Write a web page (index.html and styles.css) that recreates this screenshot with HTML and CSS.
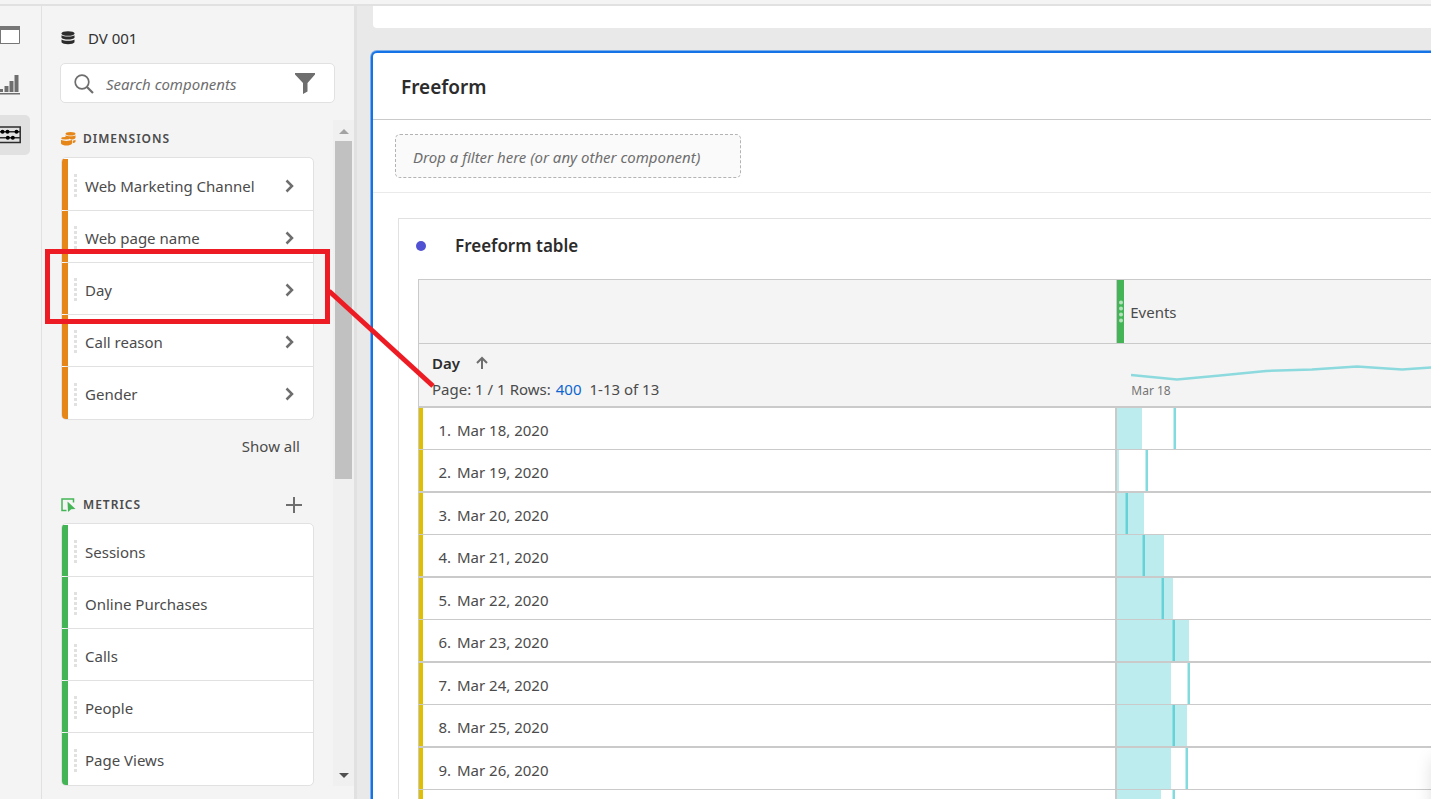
FILE: index.html
```html
<!DOCTYPE html>
<html lang="en">
<head>
<meta charset="utf-8">
<title>Freeform</title>
<link rel="stylesheet" href="styles.css">
</head>
<body>
<div class="topbar"></div>
<div class="app">
  <nav class="rail" aria-label="Panels">
    <button class="rail-btn" aria-label="Panels"><svg width="30" height="40" viewBox="0 0 30 40"><path fill="#fff" d="M-2 13h22v15H-2z"/><path fill="#767676" d="M-2 11h22v4H-2z"/><path fill="none" stroke="#767676" d="M-2 28.500h21.500V13M.5 15v13"/></svg></button>
    <button class="rail-btn" aria-label="Visualizations"><svg width="30" height="40" viewBox="0 0 30 40"><path fill="#6e6e6e" d="M0 24h3v3H0zM4.500 21h4v6h-4zM9.500 16h4v11h-4zM14.500 10h4v17h-4zM0 28h20v1.500H0z"/></svg></button>
    <button class="rail-btn selected" aria-label="Components"><svg width="30" height="40" viewBox="0 0 30 40"><path fill="none" stroke="#2c2c2c" stroke-width="1.500" d="M-2 12h22.200v15.500H-2M0 16.800h20M0 22.800h20"/><circle cx="2.500" cy="16.800" r="2"/><circle cx="7.500" cy="16.800" r="2"/><circle cx="16.500" cy="16.800" r="2"/><circle cx="7.800" cy="22.800" r="2"/><circle cx="12.800" cy="22.800" r="2"/></svg></button>
  </nav>

  <aside class="sidebar">
    <div class="source">
      <svg width="14" height="14" viewBox="0 0 14 14" fill="#2c2c2c"><ellipse cx="7" cy="2.500" rx="6.500" ry="2.300"/><path d="M.5 4.300c2 1.700 11 1.700 13 0v2.400c-1 2.400-12 2.400-13 0zM.5 8.500c2 1.700 11 1.700 13 0v2.800c-1 2.600-12 2.600-13 0z"/></svg>
      <span>DV 001</span>
    </div>
    <div class="search">
      <svg width="22" height="22" viewBox="0 0 22 22" fill="none" stroke="#6e6e6e"><circle cx="9" cy="10" r="6.800" stroke-width="1.700"/><path stroke-width="2.200" d="M14 15l6 6"/></svg>
      <input type="text" placeholder="Search components" aria-label="Search components">
      <button class="plain" aria-label="Filter"><svg width="20" height="22" viewBox="0 0 20 22"><path fill="#6e6e6e" d="M0 1h20v1.500L12.500 11v8.500L8 22V11L0 2.500z"/></svg></button>
    </div>
    <div class="scroller">
      <div class="lists">
        <div class="section-head">
          <svg width="15" height="14" viewBox="0 0 15 14" fill="#e68619"><ellipse cx="9.500" cy="1.800" rx="5" ry="1.800"/><path d="M4.500 3.300c1.500 1.300 8.500 1.300 10 0v2.500c-.5 1.500-3 1.700-4.500 1.700C9 6 6 5.700 4.500 5.400zM0 7.800c2 1.500 9 1.500 11 0v3.700c-1.500 2.800-9.500 2.800-11 0z"/><ellipse cx="4.500" cy="6.200" rx="4.300" ry="1.200"/><path d="M11.700 8.800c1.300-.2 2.300-.5 2.800-1v2c-.5.800-1.500 1.200-2.800 1.400z"/></svg>
          <h2>DIMENSIONS</h2>
        </div>
        <ul class="cards dimensions">
          <li><i class="grip"></i><span>Web Marketing Channel</span><button class="plain" aria-label="Expand Web Marketing Channel"><svg class="chev" viewBox="0 0 9 14"><path d="M1.500 1.500L7 7l-5.500 5.500"/></svg></button></li>
          <li><i class="grip"></i><span>Web page name</span><button class="plain" aria-label="Expand Web page name"><svg class="chev" viewBox="0 0 9 14"><path d="M1.500 1.500L7 7l-5.500 5.500"/></svg></button></li>
          <li><i class="grip"></i><span>Day</span><button class="plain" aria-label="Expand Day"><svg class="chev" viewBox="0 0 9 14"><path d="M1.500 1.500L7 7l-5.500 5.500"/></svg></button></li>
          <li><i class="grip"></i><span>Call reason</span><button class="plain" aria-label="Expand Call reason"><svg class="chev" viewBox="0 0 9 14"><path d="M1.500 1.500L7 7l-5.500 5.500"/></svg></button></li>
          <li><i class="grip"></i><span>Gender</span><button class="plain" aria-label="Expand Gender"><svg class="chev" viewBox="0 0 9 14"><path d="M1.500 1.500L7 7l-5.500 5.500"/></svg></button></li>
        </ul>
        <button class="plain show-all">Show all</button>
        <div class="section-head">
          <svg width="15" height="14" viewBox="0 0 15 14"><path fill="none" stroke="#44b556" stroke-width="1.500" d="M12.500 4.500V1H1v11.500h4.500"/><path fill="#44b556" d="M6.500 3.500L14.500 11l-4.300.2L7 14z"/></svg>
          <h2>METRICS</h2>
          <button class="plain add" aria-label="Add metric"><svg width="16" height="16" viewBox="0 0 16 16"><path stroke="#6e6e6e" stroke-width="2" d="M8 0v16M0 8h16"/></svg></button>
        </div>
        <ul class="cards metrics">
          <li><i class="grip"></i><span>Sessions</span></li>
          <li><i class="grip"></i><span>Online Purchases</span></li>
          <li><i class="grip"></i><span>Calls</span></li>
          <li><i class="grip"></i><span>People</span></li>
          <li><i class="grip"></i><span>Page Views</span></li>
        </ul>
      </div>
      <div class="scrollbar">
        <svg width="10" height="5" viewBox="0 0 10 5"><path fill="#a3a3a3" d="M5 0l5 5H0z"/></svg>
        <div class="thumb"></div>
        <svg width="10" height="5" viewBox="0 0 10 5"><path fill="#505050" d="M0 0h10L5 5z"/></svg>
      </div>
    </div>
  </aside>

  <main class="workspace">
    <div class="previous-panel"></div>
    <section class="panel">
      <h1>Freeform</h1>
      <div class="filter-zone"><div class="drop">Drop a filter here (or any other component)</div></div>
      <div class="viz">
        <div class="viz-head"><i class="dot"></i><h3>Freeform table</h3></div>
        <table>
          <colgroup><col class="col-day"><col></colgroup>
          <thead>
            <tr class="metric-row">
              <th></th>
              <th><div class="metric"><svg class="handle" viewBox="0 0 7 24" fill="#b5e2bc"><circle cx="4" cy="3" r="2"/><circle cx="4" cy="9" r="2"/><circle cx="4" cy="15" r="2"/><circle cx="4" cy="21" r="2"/></svg><span>Events</span></div></th>
            </tr>
            <tr class="summary-row">
              <th>
                <div class="sort"><span>Day</span><svg width="12" height="14" viewBox="0 0 12 14" fill="none" stroke="#6e6e6e" stroke-width="2"><path d="M6 13V2M1 7l5-5 5 5"/></svg></div>
                <div class="paging"><span>Page: 1 / 1</span><span>Rows:</span><button class="plain rows-link">400</button><span>1-13 of 13</span></div>
              </th>
              <th><div class="trend"><svg width="300" height="18" viewBox="0 0 300 18"><path fill="none" stroke="#8cdade" stroke-width="2.500" d="M0 10l46 4.500 43-4 46-4.500 46-1.500 45-3 45 3 29-2"/></svg><span>Mar 18</span></div></th>
            </tr>
          </thead>
          <tbody>
            <tr><td><div class="day"><b>1.</b>Mar 18, 2020</div></td><td><div class="cell"><i class="bar" style="width:25px"></i><i class="tick" style="left:56px"></i></div></td></tr>
            <tr><td><div class="day"><b>2.</b>Mar 19, 2020</div></td><td><div class="cell"><i class="bar" style="width:2px"></i><i class="tick" style="left:28px"></i></div></td></tr>
            <tr><td><div class="day"><b>3.</b>Mar 20, 2020</div></td><td><div class="cell"><i class="bar" style="width:27px"></i><i class="tick" style="left:8px"></i></div></td></tr>
            <tr><td><div class="day"><b>4.</b>Mar 21, 2020</div></td><td><div class="cell"><i class="bar" style="width:47px"></i><i class="tick" style="left:25px"></i></div></td></tr>
            <tr><td><div class="day"><b>5.</b>Mar 22, 2020</div></td><td><div class="cell"><i class="bar" style="width:56px"></i><i class="tick" style="left:44px"></i></div></td></tr>
            <tr><td><div class="day"><b>6.</b>Mar 23, 2020</div></td><td><div class="cell"><i class="bar" style="width:72px"></i><i class="tick" style="left:55px"></i></div></td></tr>
            <tr><td><div class="day"><b>7.</b>Mar 24, 2020</div></td><td><div class="cell"><i class="bar" style="width:54px"></i><i class="tick" style="left:70px"></i></div></td></tr>
            <tr><td><div class="day"><b>8.</b>Mar 25, 2020</div></td><td><div class="cell"><i class="bar" style="width:70px"></i><i class="tick" style="left:55px"></i></div></td></tr>
            <tr><td><div class="day"><b>9.</b>Mar 26, 2020</div></td><td><div class="cell"><i class="bar" style="width:54px"></i><i class="tick" style="left:68px"></i></div></td></tr>
            <tr><td><div class="day"></div></td><td><div class="cell"><i class="bar" style="width:44px"></i><i class="tick" style="left:55px"></i></div></td></tr>
          </tbody>
        </table>
      </div>
    </section>
  </main>
</div>
<svg class="callout" width="400" height="150" viewBox="0 0 400 150" fill="none" stroke="#ed1c24" stroke-width="5"><path d="M2.500 2.500h280v70h-280z"/><path d="M284 42L388 137"/></svg>
<div class="float-shadow"></div>
</body>
</html>
```
FILE: styles.css
```css
* { box-sizing: border-box; }

body {
  margin: 0;
  height: 100vh;
  display: flex;
  flex-direction: column;
  overflow: hidden;
  position: relative;
  background: #f4f4f4;
  color: #4b4b4b;
  font: 15px/24px "Noto Sans", "Open Sans", sans-serif;
}

h1, h2, h3, ul { margin: 0; padding: 0; }
ul { list-style: none; }
svg { display: block; flex: none; }

button, input { font: inherit; color: inherit; }

.plain, .rail-btn {
  padding: 0;
  border: 0;
  background: none;
}

.topbar {
  flex: none;
  height: 6px;
  border-bottom: 2px solid #e1e1e1;
}

.app {
  flex: 1;
  min-height: 0;
  display: flex;
}

.rail {
  flex: none;
  width: 42px;
  padding-top: 9px;
  display: flex;
  flex-direction: column;
  gap: 10px;
  border-right: 1px solid #e1e1e1;
}

.rail-btn {
  width: 30px;
  height: 40px;
  border-radius: 0 5px 5px 0;
  overflow: hidden;
}

.rail-btn.selected { background: #e1e1e1; }

.sidebar {
  flex: none;
  width: 315px;
  display: flex;
  flex-direction: column;
  border-right: 3px solid #e1e1e1;
}

.source {
  display: flex;
  align-items: center;
  gap: 13px;
  padding: 20px 19px 13px;
  color: #323232;
}

.search {
  display: flex;
  align-items: center;
  height: 40px;
  margin: 0 19px 0 18px;
  padding: 0 19px 0 12px;
  background: #fff;
  border: 1px solid #e1e1e1;
  border-radius: 5px;
}

.search input {
  flex: 1;
  min-width: 0;
  padding: 2px 0 0 11px;
  border: 0;
  outline: 0;
  background: none;
  font-style: italic;
}

.search input::placeholder { color: #6e6e6e; opacity: 1; }

.scroller {
  display: flex;
  margin: 17px 0 13px;
  flex: 1;
  min-height: 0;
}

.lists {
  flex: 1;
  padding: 6px 19px 0 19px;
  display: flex;
  flex-direction: column;
}

.section-head {
  display: flex;
  align-items: center;
  gap: 7px;
  height: 26px;
}

.section-head h2 {
  font-size: 12px;
  font-weight: 600;
  letter-spacing: 1px;
}

.add { margin-left: auto; padding-right: 12px; }

.cards {
  padding-top: 1px;
  background: #fff;
  border: 1px solid #e1e1e1;
  border-radius: 5px;
  margin-top: 5px;
  overflow: hidden;
}

.cards li {
  display: flex;
  align-items: center;
  height: 52px;
  border-bottom: 1px solid #e1e1e1;
  border-left: 6px solid transparent;
  padding: 2px 19px 0 6px;
}

.cards li::before {
  content: "";
  align-self: stretch;
  width: 6px;
  margin: -2px 0 0 -12px;
  flex: none;
}

.cards li:last-child { border-bottom: 0; }
.dimensions li::before { background: #e68619; }
.metrics li::before { background: #44b556; }
.cards button { margin-left: auto; }

.grip {
  flex: none;
  width: 3px;
  height: 23px;
  margin: 0 8px 0 6px;
  background: repeating-linear-gradient(#e1e1e1 0 3px, transparent 3px 5px);
}

.chev {
  width: 9px;
  height: 14px;
  fill: none;
  stroke: #6e6e6e;
  stroke-width: 2.5;
}

.show-all {
  align-self: flex-end;
  margin: 14px 14px 34px 0;
}

.scrollbar {
  flex: none;
  width: 21px;
  padding: 9px 2px 8px;
  display: flex;
  flex-direction: column;
  align-items: center;
  background: #f0f0f0;
}

.thumb {
  width: 17px;
  height: 338px;
  margin: 7px 0 auto;
  background: #c1c1c1;
}

.workspace {
  flex: 1;
  min-width: 0;
  display: flex;
  flex-direction: column;
  padding-left: 14px;
  background: #e9e9e9;
}

.previous-panel {
  flex: none;
  height: 22px;
  margin-left: 2px;
  background: #fff;
  border-bottom-left-radius: 4px;
}

.panel {
  flex: 1;
  min-height: 0;
  margin-top: 23px;
  background: #fff;
  border: solid #1473e6;
  border-width: 2px 0 0 2px;
  border-top-left-radius: 6px;
  box-shadow: 0 0 0 1px rgba(20, 115, 230, .5);
}

.panel h1 {
  padding: 21px 28px 19px;
  font-size: 19px;
  line-height: 26px;
  font-weight: 600;
  color: #2c2c2c;
  border-bottom: 1px solid #cacaca;
}

.filter-zone {
  padding: 14px 22px;
  border-bottom: 1px solid #eaeaea;
}

.drop {
  width: 346px;
  padding: 10px 17px 8px;
  white-space: nowrap;
  font-style: italic;
  color: #6e6e6e;
  background: #fafafa;
  border: 1px dashed #b3b3b3;
  border-radius: 5px;
}

.viz {
  margin: 25px 0 0 25px;
  padding-left: 19px;
  border: solid #e1e1e1;
  border-width: 1px 0 0 1px;
}

.viz-head {
  display: flex;
  align-items: center;
  gap: 29px;
  height: 60px;
  padding-bottom: 6px;
}

.dot {
  width: 10px;
  height: 10px;
  margin-left: -2px;
  border-radius: 50%;
  background: #5151d3;
}

.viz-head h3 {
  font-size: 17px;
  font-weight: 600;
  color: #2c2c2c;
}

table {
  width: 100%;
  table-layout: fixed;
  border-spacing: 0;
  border-left: 1px solid #cacaca;
  border-top: 1px solid #cacaca;
}

.col-day { width: 69%; }

th, td {
  padding: 0;
  text-align: left;
  font-weight: 400;
}

th { background: #f4f4f4; }

.metric-row th {
  height: 64px;
  border-bottom: 1px solid #cacaca;
}

.metric-row th:first-child { border-right: 1px solid #cacaca; }

.metric {
  display: flex;
  align-items: center;
  gap: 6px;
  height: 63px;
}

.handle {
  width: 7px;
  height: 63px;
  background: #44b556;
}

.summary-row th {
  height: 64px;
  vertical-align: top;
  border-bottom: 2px solid #cacaca;
}

.sort {
  display: flex;
  align-items: center;
  gap: 16px;
  padding: 7px 13px 0;
  font-weight: 600;
  color: #2c2c2c;
}

.paging {
  display: flex;
  gap: 4px;
  padding: 2px 13px 0;
}

.rows-link { color: #0d66d0; margin: 0 4px 0 1px; }

.trend {
  overflow: hidden;
  padding: 21px 0 0 14px;
  font-size: 12px;
  line-height: 16px;
  color: #747474;
}

td { border-bottom: 1px solid #cacaca; }
tr:nth-child(even) td { border-bottom-width: 2px; }
td:first-child { border-right: 2px solid #cacaca; }

.day {
  display: flex;
  align-items: center;
  gap: 6px;
  height: 41px;
  padding: 2px 0 0 4px;
  border-left: 4px solid #dfbf00;
}

.day b {
  width: 24px;
  text-align: right;
  font-weight: 400;
}

.cell {
  position: relative;
  height: 41px;
}

.bar {
  display: block;
  height: 100%;
  background: #bcecee;
}

.tick {
  position: absolute;
  top: 0;
  bottom: 0;
  width: 3px;
  background: linear-gradient(90deg, rgba(38, 192, 199, .28) 1px, rgba(38, 192, 199, .58) 1px);
}

.callout {
  position: absolute;
  left: 45px;
  top: 249px;
  pointer-events: none;
}

.float-shadow {
  position: absolute;
  right: -42px;
  bottom: -20px;
  width: 40px;
  height: 60px;
  box-shadow: 0 0 18px rgba(0, 0, 0, .15);
}
```
